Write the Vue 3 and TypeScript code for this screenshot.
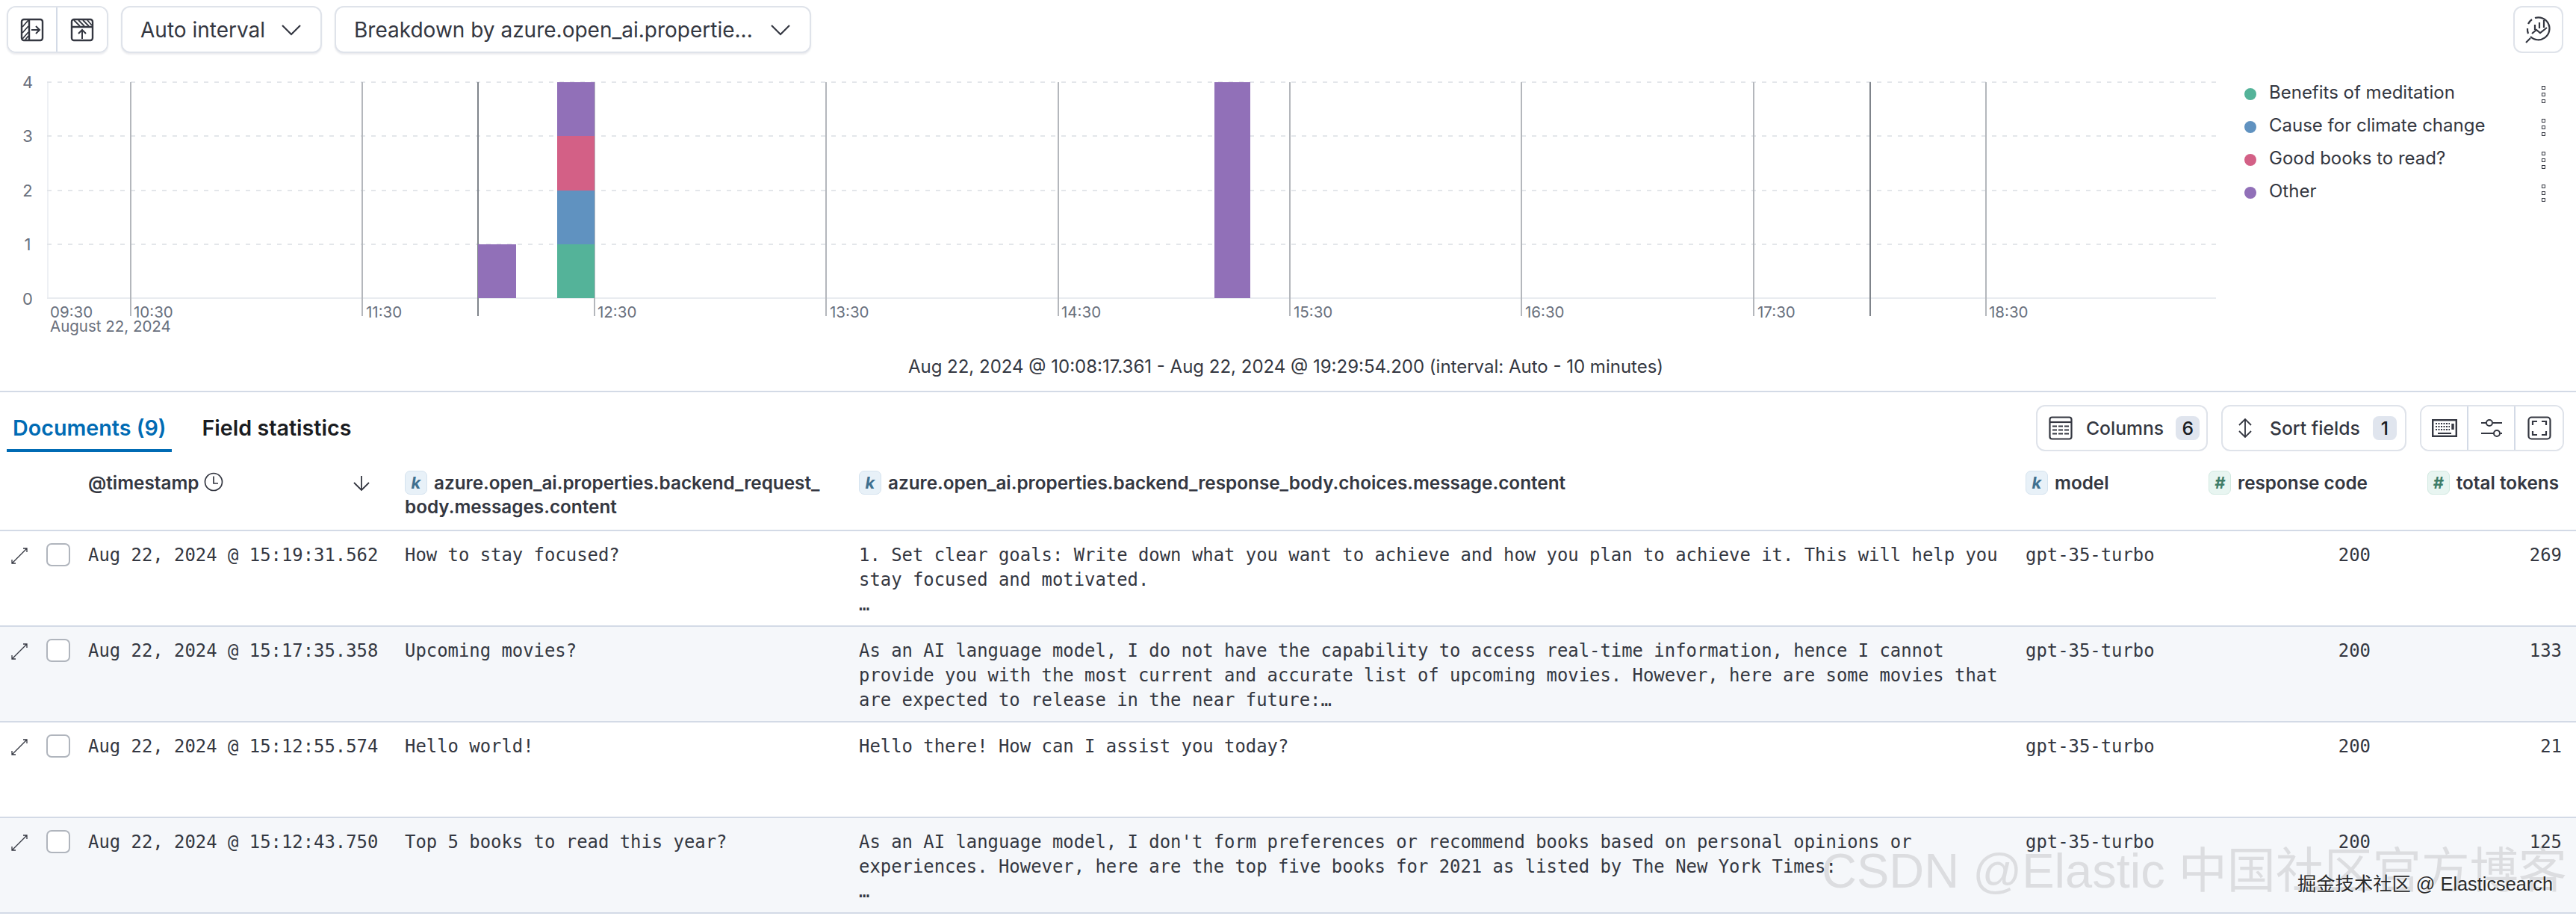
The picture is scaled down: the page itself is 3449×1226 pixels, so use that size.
<template>
  <div class="page">
    <!-- top toolbar -->
    <div class="toolbar">
      <div class="btn-group">
        <button class="icon-cell first">
          <svg width="32" height="32" viewBox="0 0 32 32" fill="none" stroke="#343741" stroke-width="2.4">
            <rect x="2" y="2" width="28" height="28" rx="3" />
            <path d="M12 2v28" />
            <path d="M3 12l8-9M3 20l8-9M3 28l8-9M7 29l4-5" stroke-width="1.8" />
            <path d="M15 16h11M21 11l5 5-5 5" stroke-width="2" />
          </svg>
        </button>
        <button class="icon-cell">
          <svg width="32" height="32" viewBox="0 0 32 32" fill="none" stroke="#343741" stroke-width="2.4">
            <rect x="2" y="2" width="28" height="28" rx="3" />
            <path d="M2 12h28" />
            <path d="M5 3l8 8M11 3l8 8M17 3l8 8M23 3l6 7" stroke-width="1.8" />
            <path d="M16 28V17M11 21l5-5 5 5" stroke-width="2" />
          </svg>
        </button>
      </div>
      <button class="select interval">
        <span>Auto interval</span>
        <svg class="chev" width="28" height="16" viewBox="0 0 28 16" fill="none" stroke="#343741" stroke-width="2.2"><path d="M2 2l12 12L26 2" /></svg>
      </button>
      <button class="select breakdown">
        <span>Breakdown by azure.open_ai.propertie...</span>
        <svg class="chev" width="28" height="16" viewBox="0 0 28 16" fill="none" stroke="#343741" stroke-width="2.2"><path d="M2 2l12 12L26 2" /></svg>
      </button>
      <button class="insights">
        <svg width="40" height="40" viewBox="0 0 40 40" fill="none" stroke="#343741" stroke-width="2.2">
          <path d="M15 4A15 15 0 1 1 9 29" />
          <path d="M6 25a15 15 0 0 1-1-7M6 12a15 15 0 0 1 5-6" />
          <path d="M9 31l-6 6" />
          <path d="M15 13v7M21 10v8M27 7v10" />
          <path d="M11 25l6-5 5 4 9-7" />
        </svg>
      </button>
    </div>

    <!-- histogram + legend -->
    <div class="chart-row">
      <svg class="chart" width="2990" height="391" viewBox="0 79 2990 391">
        <line x1="64" y1="110" x2="64" y2="399" stroke="#eef0f4" stroke-width="2" />
        <line x1="63" y1="399" x2="2967" y2="399" stroke="#e9ecf0" stroke-width="2" />
        <line v-for="y in gridY" :key="y" x1="63" :y1="y" x2="2967" :y2="y" stroke="#e3e6ea" stroke-width="2" stroke-dasharray="6 8" />
        <line v-for="t in ticks" :key="t.x" :x1="t.x" y1="110" :x2="t.x" y2="423" :stroke="t.dark ? '#7f848b' : '#b4b7bc'" stroke-width="2" />
        <rect v-for="b in bars" :key="b.x + '-' + b.y" :x="b.x" :y="b.y" :width="b.w" :height="b.h" :fill="b.c" />
        <text v-for="(l, i) in yLabels" :key="l" x="37" :y="i * 72.4 + 118" class="axis ylab" text-anchor="middle">{{ l }}</text>
        <text x="67" y="425" class="axis">09:30</text>
        <text v-for="t in timeLabels" :key="t.l" :x="t.x" y="425" class="axis">{{ t.l }}</text>
        <text x="67" y="444" class="axis">August 22, 2024</text>
      </svg>
      <div class="legend">
        <div v-for="l in legend" :key="l.name" class="legend-row">
          <span class="dot" :style="{ background: l.color }"></span>
          <span class="legend-name">{{ l.name }}</span>
          <span class="legend-menu"><i></i><i></i><i></i></span>
        </div>
      </div>
    </div>

    <div class="range">Aug 22, 2024 @ 10:08:17.361 - Aug 22, 2024 @ 19:29:54.200 (interval: Auto - 10 minutes)</div>

    <!-- tabs -->
    <div class="tabs-row">
      <div class="tabs">
        <div class="tab active">Documents (9)</div>
        <div class="tab">Field statistics</div>
      </div>
      <div class="grid-tools">
        <button class="tool columns">
          <svg width="32" height="32" viewBox="0 0 32 32" fill="none" stroke="#343741" stroke-width="2.2">
            <rect x="1.5" y="1.5" width="29" height="29" rx="3" />
            <path d="M1.5 8h29" />
            <path d="M5 13.5h22M5 18.5h22M5 23.5h22" stroke-dasharray="6 2" />
          </svg>
          <span>Columns</span>
          <b class="count">6</b>
        </button>
        <button class="tool sortf">
          <svg width="20" height="26" viewBox="0 0 20 26" fill="none" stroke="#343741" stroke-width="1.8">
            <path d="M2 9l8-8 8 8M2 17l8 8 8-8M10 1v24" />
          </svg>
          <span>Sort fields</span>
          <b class="count">1</b>
        </button>
        <div class="tool-group">
          <button class="tool-cell">
            <svg width="34" height="24" viewBox="0 0 34 24" fill="none" stroke="#343741">
              <rect x="1.2" y="1.2" width="31.6" height="21.6" stroke-width="2.4" />
              <path d="M5 6h19M5 10h19M5 14h19" stroke-width="2" stroke-dasharray="2 1.5" />
              <path d="M8 19h18" stroke-width="2" />
              <path d="M28 6v8" stroke-width="3.4" />
            </svg>
          </button>
          <button class="tool-cell">
            <svg width="30" height="24" viewBox="0 0 30 24" fill="none" stroke="#343741" stroke-width="2">
              <path d="M1 5h7M17 5h12M1 19h17M27 19h2" />
              <circle cx="12" cy="5" r="4" />
              <circle cx="22" cy="19" r="4" />
            </svg>
          </button>
          <button class="tool-cell">
            <svg width="32" height="32" viewBox="0 0 32 32" fill="none" stroke="#343741" stroke-width="2.2">
              <rect x="1.5" y="1.5" width="29" height="29" rx="4" />
              <path d="M7 12V7h6M19 7h6v5M25 20v5h-6M13 25H7v-5" />
            </svg>
          </button>
        </div>
      </div>
    </div>

    <!-- data grid -->
    <div class="grid header">
      <div class="cell"></div>
      <div class="cell"></div>
      <div class="cell th ts">
        <span>@timestamp</span>
        <svg class="clock" width="26" height="26" viewBox="0 0 26 26" fill="none" stroke="#343741" stroke-width="1.7">
          <circle cx="13" cy="13" r="11.5" />
          <path d="M13 5.5V15h6" />
        </svg>
        <svg class="arrow" width="26" height="22" viewBox="0 0 26 22" fill="none" stroke="#343741" stroke-width="1.8">
          <path d="M13 1v19M3 10l10 10 10-10" />
        </svg>
      </div>
      <div class="cell th"><i class="tok kw">k</i>azure.open_ai.properties.backend_request_<br />body.messages.content</div>
      <div class="cell th"><i class="tok kw">k</i>azure.open_ai.properties.backend_response_body.choices.message.content</div>
      <div class="cell th"><i class="tok kw">k</i>model</div>
      <div class="cell th right"><i class="tok num">#</i>response code</div>
      <div class="cell th right"><i class="tok num">#</i>total tokens</div>
    </div>

    <div v-for="(r, i) in rows" :key="r.ts" class="grid row" :class="{ odd: i % 2 === 1 }">
      <div class="cell expand">
        <svg width="24" height="24" viewBox="0 0 24 24" fill="none" stroke="#343741" stroke-width="1.3">
          <path d="M2 22L22 2M17 2h5v5M2 17v5h5" />
        </svg>
      </div>
      <div class="cell check"><span class="box"></span></div>
      <div class="cell td nowrap">{{ r.ts }}</div>
      <div class="cell td">{{ r.q }}</div>
      <div class="cell td answer">{{ r.a }}</div>
      <div class="cell td">gpt-35-turbo</div>
      <div class="cell td right">200</div>
      <div class="cell td right">{{ r.tokens }}</div>
    </div>

    <div class="wm-big">CSDN @Elastic 中国社区官方博客</div>
    <div class="wm-small">掘金技术社区 @ Elasticsearch</div>
  </div>
</template>

<script setup lang="ts">
const gridY = [110, 182, 255, 327]
const yLabels = ['4', '3', '2', '1', '0']

const ticks = [
  { x: 175 }, { x: 485 }, { x: 640, dark: true }, { x: 796 }, { x: 1106 }, { x: 1417 },
  { x: 1727 }, { x: 2037 }, { x: 2348 }, { x: 2504, dark: true }, { x: 2659 },
]

const timeLabels = [
  { x: 179, l: '10:30' }, { x: 490, l: '11:30' }, { x: 800, l: '12:30' }, { x: 1111, l: '13:30' },
  { x: 1421, l: '14:30' }, { x: 1732, l: '15:30' }, { x: 2042, l: '16:30' }, { x: 2353, l: '17:30' },
  { x: 2663, l: '18:30' },
]

const GREEN = '#54b399'
const BLUE = '#6092c0'
const PINK = '#d36086'
const PURPLE = '#9170b8'

const bars = [
  { x: 640, y: 327, w: 51, h: 72, c: PURPLE },
  { x: 746, y: 327, w: 50, h: 72, c: GREEN },
  { x: 746, y: 255, w: 50, h: 72, c: BLUE },
  { x: 746, y: 182, w: 50, h: 73, c: PINK },
  { x: 746, y: 110, w: 50, h: 72, c: PURPLE },
  { x: 1626, y: 110, w: 48, h: 289, c: PURPLE },
]

const legend = [
  { name: 'Benefits of meditation', color: GREEN },
  { name: 'Cause for climate change', color: BLUE },
  { name: 'Good books to read?', color: PINK },
  { name: 'Other', color: PURPLE },
]

const rows = [
  {
    ts: 'Aug 22, 2024 @ 15:19:31.562',
    q: 'How to stay focused?',
    a: '1. Set clear goals: Write down what you want to achieve and how you plan to achieve it. This will help you\nstay focused and motivated.\n…',
    tokens: 269,
  },
  {
    ts: 'Aug 22, 2024 @ 15:17:35.358',
    q: 'Upcoming movies?',
    a: 'As an AI language model, I do not have the capability to access real-time information, hence I cannot\nprovide you with the most current and accurate list of upcoming movies. However, here are some movies that\nare expected to release in the near future:…',
    tokens: 133,
  },
  {
    ts: 'Aug 22, 2024 @ 15:12:55.574',
    q: 'Hello world!',
    a: 'Hello there! How can I assist you today?',
    tokens: 21,
  },
  {
    ts: 'Aug 22, 2024 @ 15:12:43.750',
    q: 'Top 5 books to read this year?',
    a: "As an AI language model, I don't form preferences or recommend books based on personal opinions or\nexperiences. However, here are the top five books for 2021 as listed by The New York Times:\n…",
    tokens: 125,
  },
]
</script>

<style>
html, body { margin: 0; background: #fff; overflow: hidden; }
</style>

<style scoped>
.page{position:relative;width:3449px;height:1226px;overflow:hidden;background:#fff;color:#343741;font-family:Inter,"Liberation Sans",sans-serif}
button{font-family:inherit;color:inherit;background:#fff;padding:0;margin:0;cursor:pointer}

.toolbar{display:flex;align-items:flex-start;gap:17px;height:79px;box-sizing:border-box;padding:8px 17px 0 9px}
.btn-group{display:flex;height:63px;border:2px solid #dfe3ea;border-radius:12px;box-sizing:border-box;box-shadow:0 2px 2px rgba(90,100,120,.12);overflow:hidden}
.icon-cell{width:66px;border:0;display:flex;align-items:center;justify-content:center}
.icon-cell.first{border-right:2px solid #d3dae6}
.select{height:63px;box-sizing:border-box;border:2px solid #dfe3ea;border-radius:12px;box-shadow:0 2px 2px rgba(90,100,120,.12);display:flex;align-items:center;justify-content:space-between;font-size:28px;padding:0 25px 0 24px;white-space:nowrap}
.interval{width:269px}
.breakdown{width:638px}
.insights{margin-left:auto;width:67px;height:63px;border:2px solid #dfe3ea;border-radius:12px;box-sizing:border-box;display:flex;align-items:center;justify-content:center}

.chart-row{display:flex;height:391px}
.chart{flex:none;display:block}
.axis{font-family:Inter,"Liberation Sans",sans-serif;font-size:20.5px;fill:#69707d}
.ylab{font-size:22px}
.legend{flex:1;padding:25px 41px 0 15px}
.legend-row{display:flex;align-items:center;height:44px;font-size:24px}
.dot{width:16px;height:16px;border-radius:50%;margin-right:17px;flex:none}
.legend-name{flex:1;padding-bottom:5px}
.legend-menu{display:flex;flex-direction:column;gap:4px}
.legend-menu i{display:block;width:5px;height:5px;box-sizing:border-box;border:1.5px solid #343741}

.range{height:55px;text-align:center;font-size:24px;line-height:42px;border-bottom:2px solid #d3dae6;box-sizing:border-box;padding-right:6px}

.tabs-row{display:flex;justify-content:space-between;height:80px;padding-right:16px}
.tabs{display:flex;align-items:flex-end;padding-left:9px;gap:32px}
.tab{font-size:28.7px;font-weight:600;line-height:32px;padding:0 8px 12px;border-bottom:4px solid transparent;color:#1a1c21}
.tab.active{color:#006bb4;border-bottom-color:#006bb4}
.grid-tools{display:flex;gap:18px;padding-top:17px}
.tool{height:62px;box-sizing:border-box;border:2px solid #dfe3ea;border-radius:12px;display:flex;align-items:center;font-size:24.7px;font-weight:500}
.tool.columns{width:230px;padding-left:15px}
.tool.columns span{margin-left:18px;margin-right:16px}
.tool.sortf{width:248px;padding-left:20px}
.tool.sortf span{margin-left:23px;margin-right:17px}
.count{width:32px;height:32px;border-radius:8px;background:#e0e5ee;color:#1a1c21;font-weight:500;display:flex;align-items:center;justify-content:center}
.tool-group{display:flex;height:62px;box-sizing:border-box;border:2px solid #dfe3ea;border-radius:12px;overflow:hidden}
.tool-cell{width:63px;border:0;border-right:2px solid #d3dae6;display:flex;align-items:center;justify-content:center;background:#fff}
.tool-cell:last-child{border-right:0}

.grid{display:grid;grid-template-columns:54px 47px 424px 608px 1562px 219px 279px 256px;box-sizing:border-box;border-bottom:2px solid #d3dae6}
.header{height:106px}
.row{height:128px}
.row.odd{background:#f5f7fa}
.cell{box-sizing:border-box;min-width:0}
.th{padding:25px 23px 0 17px;font-size:24.3px;font-weight:600;line-height:32px;color:#343741;white-space:nowrap}
.th.ts{display:flex;align-items:flex-start;padding-right:28px}
.clock{margin:0 0 0 6px;position:relative;top:2px}
.arrow{margin-left:auto;position:relative;top:6px}
.right{text-align:right}
.tok{display:inline-block;width:30px;height:32px;line-height:30px;box-sizing:border-box;border-radius:7px;text-align:center;font-size:22px;font-weight:700;margin-right:9px;vertical-align:top}
.tok.kw{background:#e8f1f8;border:1px solid #d5e3ef;color:#40708f}
.tok.num{background:#e8f5f1;border:1px solid #d2e9e1;color:#3f7d68}
.td{padding:16px 19px 0 17px;font-family:"DejaVu Sans Mono","Liberation Mono",monospace;font-size:23.9px;line-height:33px;color:#343741}
.nowrap{white-space:nowrap;padding-right:0}
.answer{white-space:pre-line;padding-right:0}
.expand{padding:21px 0 0 14px}
.check{padding-top:16px;display:flex;justify-content:center}
.box{display:block;width:32px;height:31px;box-sizing:border-box;background:#fff;border:2px solid #b0b5bd;border-radius:7px}

.wm-big{position:absolute;left:2439px;top:1128px;font-family:"Liberation Sans","Noto Sans CJK SC",sans-serif;font-size:65px;line-height:75px;color:rgba(130,130,130,.22);white-space:nowrap}
.wm-small{position:absolute;left:3076px;top:1167px;font-family:"Liberation Sans","Noto Sans CJK SC",sans-serif;font-size:25.3px;line-height:32px;color:#2b2b2b;white-space:nowrap;text-shadow:1px 1px 1px rgba(255,255,255,.8)}
</style>
